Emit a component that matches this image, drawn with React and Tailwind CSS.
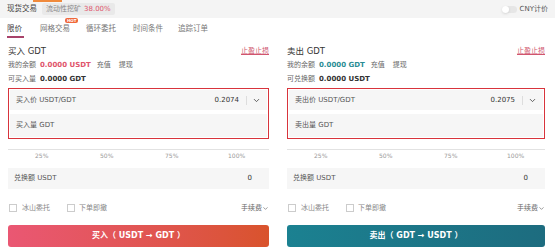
import { ChevronDown } from 'lucide-react';

const Panel = ({ side }) => {
    const buy = side === 'buy';
    return (
        <div className={buy ? 'w-[261px]' : 'w-[258px]'}>
            <div className="flex items-center justify-between h-[14px] mt-[6px]">
                <span className="text-[8.5px] text-[#333]">{buy ? '买入 GDT' : '卖出 GDT'}</span>
                <span className="text-[7px] text-[#d0556e] underline">止盈止损</span>
            </div>
            <div className="flex items-center h-[14px] text-[7px] text-[#666] gap-[4px]">
                <span>我的余额</span>
                <span className={buy ? 'font-semibold text-[#e0556b]' : 'font-semibold text-[#2a8c94]'}>
                    {buy ? '0.0000 USDT' : '0.0000 GDT'}
                </span>
                <span className="ml-[2px]">充值</span>
                <span className="ml-[4px]">提现</span>
            </div>
            <div className="flex items-center h-[14px] text-[7px] text-[#666] gap-[4px]">
                <span>{buy ? '可买入量' : '可兑换额'}</span>
                <span className="font-semibold text-[#333]">{buy ? '0.0000 GDT' : '0.0000 USDT'}</span>
            </div>
            <div className="mt-[2px] border-[1.5px] border-[#d8343c] h-[51px] px-[1px] py-[1px] flex flex-col">
                <div className="h-[20px] bg-[#f6f6f6] flex items-center px-[6px] text-[7px] text-[#555]">
                    <span className="flex-1">{buy ? '买入价 USDT/GDT' : '卖出价 USDT/GDT'}</span>
                    <span className="text-[#333]">{buy ? '0.2074' : '0.2075'}</span>
                    <span className="w-px h-[9px] bg-[#ddd] ml-[7px] mr-[5px]" />
                    <ChevronDown size={9} strokeWidth={2.2} className="text-[#444]" />
                </div>
                <div className="flex-1 mt-[4px] bg-[#f6f6f6] flex items-center px-[6px] text-[7px] text-[#555]">
                    {buy ? '买入量 GDT' : '卖出量 GDT'}
                </div>
            </div>
            <div className="mt-[10px] h-px bg-[#e2e2e2]" />
            <div className="relative h-[11px] text-[6px] text-[#999]">
                <span className="absolute left-[27px] top-[1px]">25%</span>
                <span className="absolute left-[92px] top-[1px]">50%</span>
                <span className="absolute left-[157px] top-[1px]">75%</span>
                <span className="absolute left-[220px] top-[1px]">100%</span>
            </div>
            <div className="mt-[7px] h-[21px] bg-[#f6f6f6] flex items-center justify-between px-[6px] pr-[17px] text-[7px] text-[#555]">
                <span>兑换额 USDT</span>
                <span className="text-[#333]">0</span>
            </div>
            <div className="mt-[14px] h-[10px] flex items-center text-[7px] text-[#888]">
                <span className="w-[8px] h-[8px] border border-[#ccc] ml-[1px]" />
                <span className="ml-[5px]">冰山委托</span>
                <span className="w-[8px] h-[8px] border border-[#ccc] ml-[17px]" />
                <span className="ml-[4px]">下单即撤</span>
                <span className="ml-auto flex items-center text-[#666]">
                    手续费
                    <ChevronDown size={7} strokeWidth={2.2} />
                </span>
            </div>
            <button
                className={`mt-[12px] w-full h-[22px] rounded-[3px] text-white text-[8px] font-bold flex items-center justify-center ${buy
                    ? 'bg-gradient-to-r from-[#ea5773] to-[#d9532c]'
                    : 'bg-gradient-to-r from-[#1b8191] to-[#1d6c7f]'
                    }`}
            >
                {buy ? '买入（ USDT → GDT ）' : '卖出（ GDT → USDT ）'}
            </button>
        </div>
    );
};

const App = () => {
    return (
        <div
            className="w-[555px] h-[252px] bg-white overflow-hidden"
            style={{ fontFamily: '"DejaVu Sans", "Noto Sans CJK SC", sans-serif' }}
        >
            <div className="relative h-[18px] bg-[#f4f4f4] flex items-center px-[7px]">
                <span className="absolute left-[33px] top-0 w-[29px] h-[2px] bg-[#f08a3c]" />
                <span className="text-[7.5px] text-[#444]">现货交易</span>
                <span className="ml-[5px] h-[12px] px-[4px] bg-[#e9e9e9] rounded-[2px] flex items-center text-[7px] text-[#888]">
                    流动性挖矿<span className="ml-[3px] text-[#e0556b]">38.00%</span>
                </span>
                <div className="ml-auto flex items-center">
                    <span className="w-[15px] h-[7px] rounded-full bg-[#e6e6e6] flex items-center">
                        <span className="w-[7px] h-[7px] rounded-full bg-white shadow-sm" />
                    </span>
                    <span className="ml-[3px] text-[7px] text-[#555]">CNY计价</span>
                </div>
            </div>
            <div className="flex items-end h-[20px] px-[7px] text-[7.5px] text-[#777]">
                <div className="flex flex-col items-start">
                    <span className="text-[#333]">限价</span>
                    <span className="mt-[2px] w-[17px] h-[2px] bg-[#a8436a]" />
                </div>
                <div className="relative ml-[16px] mb-[4px]">
                    网格交易
                    <span className="absolute left-[25px] top-[-5px] px-[2px] h-[5px] rounded-[2px] bg-[#f0683b] text-white text-[4px] leading-[5px] font-bold">HOT</span>
                </div>
                <span className="ml-[16px] mb-[4px]">循环委托</span>
                <span className="ml-[17px] mb-[4px]">时间条件</span>
                <span className="ml-[15px] mb-[4px]">追踪订单</span>
            </div>
            <div className="flex pl-[8px]">
                <Panel side="buy" />
                <div className="ml-[18px]">
                    <Panel side="sell" />
                </div>
            </div>
        </div>
    );
};

export default App;
